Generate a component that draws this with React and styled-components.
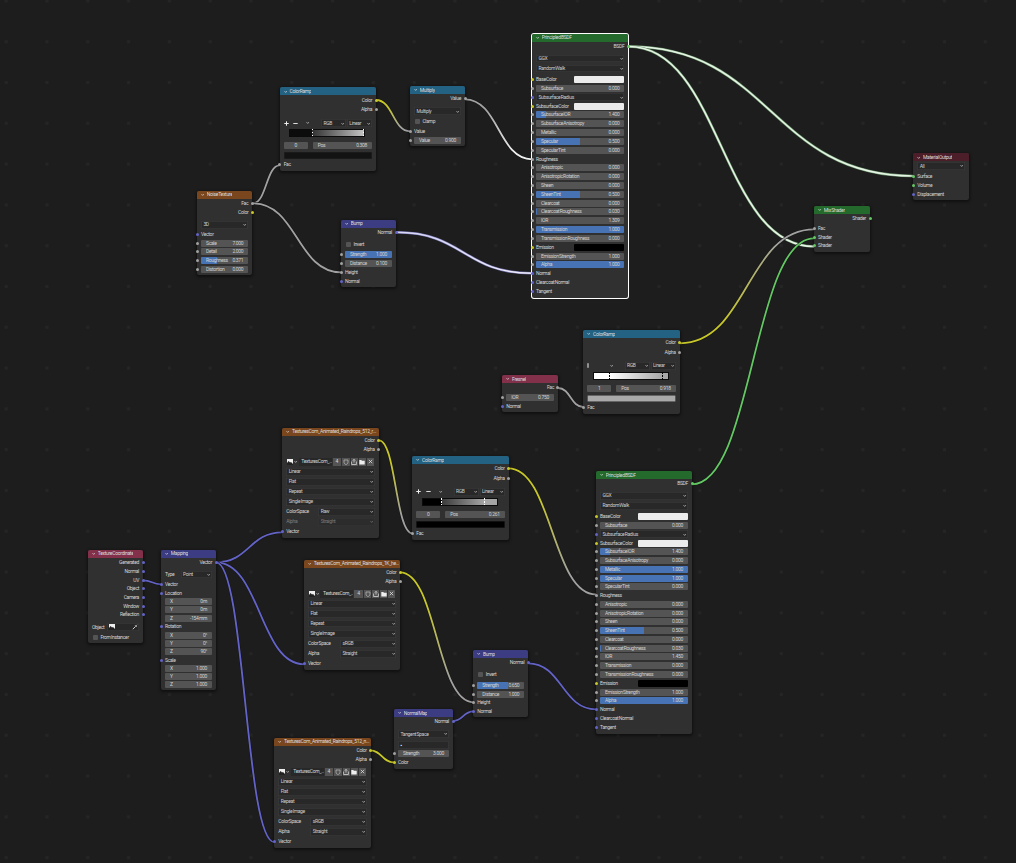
import React from 'react';
import styled, { createGlobalStyle } from 'styled-components';

const Global = createGlobalStyle`
  html, body { margin: 0; padding: 0; background: #1d1d1d; }
  #root { width: 1016px; height: 863px; }
`;

const Canvas = styled.div`
  position: relative; width: 1016px; height: 863px; overflow: hidden;
  background-color: #1d1d1d;
  background-image: radial-gradient(circle at center, #252525 0, #252525 1.5px, transparent 2.1px);
  background-size: 40.8px 40.8px;
  background-position: -14.2px -19.5px;
  font-family: "Roboto", "Liberation Sans", sans-serif;
  font-size: 5px; letter-spacing: -0.33px; word-spacing: -0.6px; line-height: 7px; color: #d6d6d6;
`;
const WireLayer = styled.svg`position: absolute; left: 0; top: 0; width: 1016px; height: 863px;`;

const NodeBox = styled.div`
  --row: ${p => p.$row || 8.84}px;
  position: absolute; left: ${p => p.$x}px; top: ${p => p.$y}px; width: ${p => p.$w}px;
  display: flex; flex-direction: column; box-sizing: border-box;
  padding-bottom: ${p => p.$pb ?? 2}px;
  background: #303030; border-radius: 2px;
  box-shadow: ${p => p.$sel ? '0 0 0 1px #fff' : '0 1px 3px 1px rgba(0,0,0,.45)'};
`;
const Header = styled.div`
  display: flex; align-items: center; gap: 2.4px; height: 8px; flex: none; box-sizing: border-box;
  padding: 0 1px 0 4px; background: ${p => p.$c}; border-radius: 2px 2px 0 0; color: #dcdcdc; overflow: hidden;
  margin-bottom: ${p => p.$mb ?? 0.4}px;
`;
const Title = styled.span`white-space: nowrap; overflow: hidden; text-overflow: ellipsis;`;
const Row = styled.div`
  position: relative; display: flex; align-items: center; flex: none; box-sizing: border-box;
  height: var(--row); margin-top: ${p => p.$mt || 0}px; padding: 0 ${p => p.$pr ?? 4}px 0 ${p => p.$pl ?? 4}px;
  justify-content: ${p => p.$out ? 'flex-end' : 'flex-start'}; gap: ${p => p.$gap || 0}px;
  opacity: ${p => p.$dim ? 0.45 : 1};
`;
const Socket = styled.i`
  position: absolute; top: 50%; width: 3px; height: 3px; margin-top: -1.5px; border-radius: 50%;
  ${p => p.$right ? 'right: -1.5px;' : 'left: -1.5px;'}
  background: ${p => p.$c};
`;
const Label = styled.span`
  white-space: nowrap; flex: none; ${p => p.$w ? `width: ${p.$w}px;` : ''}
`;
const Field = styled.div`
  flex: 1; min-width: 0; height: 7px; box-sizing: border-box; padding: 0 5px; border-radius: 1px;
  display: flex; align-items: center; justify-content: space-between; white-space: nowrap; color: #d2d2d2;
  background: ${p => p.$fill ? `linear-gradient(90deg, #4772b3 ${p.$fill * 100}%, #545454 ${p.$fill * 100}%)` : '#545454'};
  ${p => p.$center ? 'justify-content: center; flex: none; width: 24px;' : ''}
`;
const Drop = styled.div`
  flex: 1; min-width: 0; height: 7.6px; box-sizing: border-box; padding: 0 1.5px 0 2.4px; border-radius: 1px;
  display: flex; align-items: center; justify-content: space-between; white-space: nowrap;
  background: #282828; box-shadow: inset 0 0 0 .6px #3f3f3f; color: #cfcfcf;
`;
const Swatch = styled.div`flex: 1; height: 7px; border-radius: 1px; background: ${p => p.$c};`;
const CheckBox = styled.i`
  flex: none; width: 5px; height: 5px; margin-right: 2.4px; border-radius: 1px; background: #545454;
`;
const Ramp = styled.div`
  position: relative; flex: 1; height: 8px; box-sizing: border-box; border: 1px solid #0b0b0b;
  margin: 0 7px 0 5.6px; background: ${p => p.$bg};
`;
const RampMark = styled.i`
  position: absolute; top: -1px; bottom: -1px; left: ${p => p.$at}%; width: 1px;
  background: repeating-linear-gradient(180deg, ${p => p.$c} 0 1.5px, transparent 1.5px 3px);
`;
const ColorBar = styled.div`flex: 1; height: 7px; border-radius: 1px; background: ${p => p.$c}; box-shadow: inset 0 0 0 .6px #222;`;
const ToolBox = styled.div`flex: none; display: flex; align-items: center; width: 36.5px; gap: 4.4px;`;
const IconBtn = styled.div`
  flex: none; width: ${p => p.$w || 8}px; height: 7.6px; display: flex; align-items: center; justify-content: center;
  background: ${p => p.$bg || '#545454'}; border-right: .5px solid #303030; box-sizing: border-box;
`;
const NameBox = styled.div`
  flex: 1; min-width: 0; height: 7.6px; box-sizing: border-box; padding: 0 1px 0 2.6px; background: #282828;
  display: flex; align-items: center; white-space: nowrap; overflow: hidden; margin: 0 1px 0 1px;
`;

const GREY = '#a1a1a1', YEL = '#c7c729', PUR = '#6363c7', GRN = '#63c763';

const Chev = ({ size = 3.4, c = '#cfcfcf' }) => (
  <svg width={size} height={size} viewBox="0 0 6 6" style={{ flex: 'none' }}>
    <path d="M.8 1.8 3 4.4 5.2 1.8" fill="none" stroke={c} strokeWidth="1.1" />
  </svg>
);
const Plus = () => (
  <svg width="5" height="5" viewBox="0 0 5 5" style={{ flex: 'none' }}><path d="M2.5 .3v4.4M.3 2.5h4.4" stroke="#eee" strokeWidth="1" /></svg>
);
const Minus = () => (
  <svg width="5" height="5" viewBox="0 0 5 5" style={{ flex: 'none' }}><path d="M.3 2.5h4.4" stroke="#ddd" strokeWidth="1" /></svg>
);
const Tick = () => (
  <svg width="5" height="5" viewBox="0 0 5 5" style={{ flex: 'none' }}><path d="M1 .2v4.6" stroke="#eee" strokeWidth="1" /></svg>
);
const ImgIcon = () => (
  <svg width="6" height="6" viewBox="0 0 6 6" style={{ flex: 'none' }}>
    <rect width="6" height="6" fill="#eee" /><path d="M0 6V4L1.6 2 3 3.6 4 3 6 5v1z" fill="#222" />
  </svg>
);
const ShieldIcon = () => (
  <svg width="6" height="6" viewBox="0 0 6 6"><path d="M1 1h4v2.2C5 4.4 3.8 5.4 3 5.6 2.2 5.4 1 4.4 1 3.2z" fill="none" stroke="#bbb" strokeWidth=".7" /></svg>
);
const SaveIcon = () => (
  <svg width="6" height="6" viewBox="0 0 6 6"><path d="M.6 2.5v3h4.8v-3M3 .4v3.2M1.8 1.6 3 .4l1.2 1.2" fill="none" stroke="#e6e6e6" strokeWidth=".7" /></svg>
);
const FolderIcon = () => (
  <svg width="6" height="6" viewBox="0 0 6 6"><path d="M.3 1h2l.6.7h2.8v3.8H.3z" fill="#eee" /></svg>
);
const CloseIcon = () => (
  <svg width="5" height="5" viewBox="0 0 5 5"><path d="M.8.8l3.4 3.4M4.2.8.8 4.2" stroke="#ddd" strokeWidth=".8" /></svg>
);
const Dropper = () => (
  <svg width="6" height="6" viewBox="0 0 6 6" style={{ flex: 'none' }}><path d="M.8 5.2 3.6 2.4M3.2 1.4l1.4 1.4M4 1.8 5 .8" stroke="#e2e2e2" strokeWidth=".9" fill="none" /></svg>
);

const Node = ({ x, y, w, title, color, sel, row, pb, mb, children }) => (
  <NodeBox $x={x} $y={y} $w={w} $sel={sel} $row={row} $pb={pb}>
    <Header $c={color} $mb={mb}><Chev c="#e0e0e0" /><Title>{title}</Title></Header>
    {children}
  </NodeBox>
);
const Out = ({ label, c = GREY, mt }) => (
  <Row $out $mt={mt}><Label>{label}</Label><Socket $right $c={c} /></Row>
);
const In = ({ label, c = GREY, mt }) => (
  <Row $mt={mt}><Socket $c={c} /><Label>{label}</Label></Row>
);
const Num = ({ label, value, c, fill, mt, pl }) => (
  <Row $mt={mt} $pl={pl}>{c && <Socket $c={c} />}<Field $fill={fill}><span>{label}</span><span>{value}</span></Field></Row>
);
const Choice = ({ label, value, mt, labelW, dim }) => (
  <Row $mt={mt} $dim={dim}>
    {label && <Label $w={labelW}>{label}</Label>}
    <Drop><span>{value}</span><Chev /></Drop>
  </Row>
);
const Colour = ({ label, color, c = YEL, mt }) => (
  <Row $mt={mt}><Socket $c={c} /><Label $w={38}>{label}</Label><Swatch $c={color} /></Row>
);
const Check = ({ label, mt }) => (
  <Row $mt={mt} $pl={5}><CheckBox /><Label>{label}</Label></Row>
);

const ColorRamp = ({ x, y, index, pos, ramp, marks, bar, tools = true }) => (
  <Node x={x} y={y} w={96.4} title="ColorRamp" color="#246283" pb={2.2} mb={0.5}>
    <Out label="Color" c={YEL} />
    <Out label="Alpha" mt={0.4} />
    <Row $mt={5} $gap={0.8}>
      <ToolBox>
        {tools ? <><Plus /><Minus /></> : <><Tick /><span style={{ width: 5 }} /></>}
        <span style={{ marginLeft: 4 }}><Chev /></span>
      </ToolBox>
      <Drop><span>RGB</span><Chev /></Drop>
      <Drop><span>Linear</span><Chev /></Drop>
    </Row>
    <Row $mt={1}>
      <Ramp $bg={ramp}>{marks.map(m => <RampMark key={m.at} $at={m.at} $c={m.c} />)}</Ramp>
    </Row>
    <Row $mt={3.4} $gap={5}>
      <Field $center>{index}</Field>
      <Field><span>Pos</span><span>{pos}</span></Field>
    </Row>
    <Row $mt={1.2}><ColorBar $c={bar} /></Row>
    <In label="Fac" mt={0.4} />
  </Node>
);

const ImageNode = ({ x, y, title, colorSpace, dim }) => (
  <Node x={x} y={y} w={96.4} title={title} color="#79461d" pb={1.4} mb={0.3}>
    <Out label="Color" c={YEL} />
    <Out label="Alpha" mt={0.3} />
    <Row $mt={3.56} $pl={5}>
      <ImgIcon /><span style={{ marginLeft: 1 }}><Chev /></span>
      <NameBox>TexturesCom_...</NameBox>
      <IconBtn $w={9.6}>4</IconBtn>
      <IconBtn $w={8.6}><ShieldIcon /></IconBtn>
      <IconBtn><SaveIcon /></IconBtn>
      <IconBtn><FolderIcon /></IconBtn>
      <IconBtn><CloseIcon /></IconBtn>
    </Row>
    <Choice value="Linear" mt={1} />
    <Choice value="Flat" mt={1.16} />
    <Choice value="Repeat" mt={1.16} />
    <Choice value="Single Image" mt={1.3} />
    <Choice label="Color Space" labelW={32} value={colorSpace} mt={1.16} />
    <Choice label="Alpha" labelW={32} value="Straight" mt={1.16} dim={dim} />
    <In label="Vector" c={PUR} mt={1.16} />
  </Node>
);

const Bump = ({ x, y, strength, fill, distance }) => (
  <Node x={x} y={y} w={55} title="Bump" color="#3c3c83" pb={1.2}>
    <Out label="Normal" c={PUR} />
    <Check label="Invert" mt={3.16} />
    <Num label="Strength" value={strength} fill={fill} c={GREY} mt={1.56} pl={4} />
    <Num label="Distance" value={distance} c={GREY} mt={0.16} pl={4} />
    <In label="Height" />
    <In label="Normal" c={PUR} />
  </Node>
);

const Principled = ({ x, y, sel, row, v }) => (
  <Node x={x} y={y} w={sel ? 96.4 : 96} title="Principled BSDF" color="#246a2c" sel={sel} row={row} pb={2}>
    <Out label="BSDF" c={GRN} />
    <Choice value="GGX" mt={3.4} />
    <Choice value="Random Walk" mt={1.15} />
    <Colour label="Base Color" color="#ececec" mt={2.15} />
    <Num label="Subsurface" value="0.000" c={GREY} />
    <Row><Socket $c={PUR} /><Drop><span>Subsurface Radius</span><Chev /></Drop></Row>
    <Colour label="Subsurface Color" color="#ececec" />
    <Num label="Subsurface IOR" value="1.400" fill={0.11} c={GREY} />
    <Num label="Subsurface Anisotropy" value="0.000" c={GREY} />
    <Num label="Metallic" value={v.metallic} fill={v.metallicFill} c={GREY} />
    <Num label="Specular" value={v.specular} fill={v.specularFill} c={GREY} />
    <Num label="Specular Tint" value="0.000" c={GREY} />
    <In label="Roughness" />
    <Num label="Anisotropic" value="0.000" c={GREY} />
    <Num label="Anisotropic Rotation" value="0.000" c={GREY} />
    <Num label="Sheen" value="0.000" c={GREY} />
    <Num label="Sheen Tint" value="0.500" fill={0.5} c={GREY} />
    <Num label="Clearcoat" value="0.000" c={GREY} />
    <Num label="Clearcoat Roughness" value="0.030" fill={0.012} c={GREY} />
    <Num label="IOR" value={v.ior} c={GREY} />
    <Num label="Transmission" value={v.trans} fill={v.transFill} c={GREY} />
    <Num label="Transmission Roughness" value="0.000" c={GREY} />
    <Colour label="Emission" color="#000" />
    <Num label="Emission Strength" value="1.000" c={GREY} />
    <Num label="Alpha" value="1.000" fill={1} c={GREY} />
    <In label="Normal" c={PUR} />
    <In label="Clearcoat Normal" c={PUR} />
    <In label="Tangent" c={PUR} />
  </Node>
);

const wires = [
  [253, 203.3, 279.7, 165.3, GREY, GREY],
  [253, 203.3, 341, 272.3, GREY, GREY],
  [376, 100, 410, 131.3, YEL, GREY],
  [465, 99.3, 532, 159.3, GREY, '#f0f0f0'],
  [396, 232.3, 532, 273.3, '#d8d8f4', '#ecebf8', '#7a78b8'],
  [628.6, 46.5, 913.3, 176, '#e6f4e6', '#e6f4e6', '#6f9a6f'],
  [628.6, 46.5, 814, 246.5, '#e6f4e6', '#e6f4e6', '#6f9a6f'],
  [680, 343.3, 814, 229.3, YEL, GREY],
  [558, 388, 583.3, 407, GREY, GREY],
  [379, 440.3, 412.3, 533.3, YEL, GREY],
  [508.3, 468.3, 596, 594.5, YEL, GREY],
  [691.8, 484.3, 814, 238.3, GRN, GRN],
  [143, 580.3, 161, 584.3, PUR, PUR],
  [216, 562.3, 282.3, 532.3, PUR, PUR],
  [216, 562.3, 304, 664.3, PUR, PUR],
  [216, 562.3, 274.3, 842, PUR, PUR],
  [400, 572.3, 473.3, 702.3, YEL, GREY],
  [370, 750.3, 394, 762.3, YEL, YEL],
  [453, 721, 473.3, 711.3, PUR, PUR],
  [528, 663.3, 596, 709.3, PUR, PUR],
];

const Wires = () => (
  <WireLayer viewBox="0 0 1016 863">
    <defs>
      {wires.map(([x1, y1, x2, y2, a, b], i) => (
        <linearGradient key={i} id={`w${i}`} gradientUnits="userSpaceOnUse" x1={x1} y1={y1} x2={x2} y2={y2}>
          <stop offset="0.25" stopColor={a} /><stop offset="0.8" stopColor={b} />
        </linearGradient>
      ))}
    </defs>
    {wires.map(([x1, y1, x2, y2, , , under], i) => {
      const h = Math.abs(x2 - x1) * 0.5;
      const d = `M${x1} ${y1}C${x1 + h} ${y1} ${x2 - h} ${y2} ${x2} ${y2}`;
      return (
        <g key={i} fill="none">
          <path d={d} stroke={under || '#141414'} strokeWidth={under ? 2.6 : 2.8} />
          <path d={d} stroke={`url(#w${i})`} strokeWidth={under ? 1.5 : 1.8} />
        </g>
      );
    })}
  </WireLayer>
);

const App = () => (
  <Canvas>
    <Global />
    <Wires />

    <ColorRamp x={279.7} y={87.3} index="0" pos="0.308" bar="#131313"
      ramp="linear-gradient(90deg, #0c0c0c 30%, #333 30%, #c4c4c4 100%)"
      marks={[{ at: 30, c: '#fff' }, { at: 99, c: '#fff' }]} />

    <Node x={410} y={86} w={55} title="Multiply" color="#246283" pb={1.8}>
      <Out label="Value" />
      <Choice value="Multiply" mt={3.6} />
      <Check label="Clamp" mt={1} />
      <In label="Value" mt={1.2} />
      <Num label="Value" value="0.900" c={GREY} mt={0.2} />
    </Node>

    <Node x={197} y={190.7} w={55.3} title="Noise Texture" color="#79461d" pb={1}>
      <Out label="Fac" />
      <Out label="Color" c={YEL} />
      <Choice value="3D" mt={3.8} />
      <In label="Vector" c={PUR} mt={0.5} />
      <Num label="Scale" value="7.000" c={GREY} />
      <Num label="Detail" value="2.000" c={GREY} />
      <Num label="Roughness" value="0.371" fill={0.33} c={GREY} />
      <Num label="Distortion" value="0.000" c={GREY} />
    </Node>

    <Bump x={341} y={219.7} strength="1.000" fill={1} distance="0.100" />

    <Principled x={532} y={33.6} sel v={{ metallic: '0.000', specular: '0.500', specularFill: 0.5, ior: '1.309', trans: '1.000', transFill: 1 }} />

    <Node x={913.3} y={153.3} w={55.7} title="Material Output" color="#4b1e2a" pb={1.6} mb={0}>
      <Choice value="All" mt={0.4} />
      <In label="Surface" c={GRN} mt={1.2} />
      <In label="Volume" c={GRN} mt={0.4} />
      <In label="Displacement" c={PUR} mt={0.2} />
    </Node>

    <Node x={814} y={206} w={56} title="Mix Shader" color="#246a2c" pb={2}>
      <Out label="Shader" c={GRN} />
      <In label="Fac" mt={1.2} />
      <In label="Shader" c={GRN} mt={0.2} />
      <In label="Shader" c={GRN} mt={-0.8} />
    </Node>

    <ColorRamp x={583.3} y={330} index="1" pos="0.918" bar="#a9a9a9" tools={false}
      ramp="linear-gradient(90deg, #fff 0%, #fff 20%, #a8a8a8 92%, #a8a8a8 100%)"
      marks={[{ at: 21, c: '#000' }, { at: 92, c: '#000' }]} />

    <Node x={502.3} y={375} w={55.7} title="Fresnel" color="#83314a" pb={1.4}>
      <Out label="Fac" />
      <Num label="IOR" value="0.750" c={GREY} mt={0.4} />
      <In label="Normal" c={PUR} mt={0.2} />
    </Node>

    <ImageNode x={282.3} y={427.7} title="TexturesCom_Animated_Raindrops_512_roughness.tif" colorSpace="Raw" dim />

    <ColorRamp x={412.3} y={456} index="0" pos="0.261" bar="#000"
      ramp="linear-gradient(90deg, #000 25%, #3a3a3a 25%, #a6a6a6 83%, #a6a6a6 100%)"
      marks={[{ at: 25, c: '#fff' }, { at: 83, c: '#fff' }]} />

    <Principled x={596} y={471} row={8.77} v={{ metallic: '1.000', metallicFill: 1, specular: '1.000', specularFill: 1, ior: '1.450', trans: '0.000' }} />

    <Node x={88} y={549.7} w={55} title="Texture Coordinate" color="#83314a" pb={1}>
      <Out label="Generated" c={PUR} />
      <Out label="Normal" c={PUR} />
      <Out label="UV" c={PUR} />
      <Out label="Object" c={PUR} />
      <Out label="Camera" c={PUR} mt={-0.6} />
      <Out label="Window" c={PUR} />
      <Out label="Reflection" c={PUR} />
      <Row $mt={3.5}>
        <Label $w={15}>Object</Label>
        <Drop><ImgIcon /><Dropper /></Drop>
      </Row>
      <Check label="From Instancer" mt={1.2} />
    </Node>

    <Node x={161} y={549.7} w={55} title="Mapping" color="#3c3c83" pb={1}>
      <Out label="Vector" c={PUR} />
      <Choice label="Type" labelW={15.6} value="Point" mt={3.16} />
      <In label="Vector" c={PUR} mt={1.16} />
      <In label="Location" c={PUR} mt={0.16} />
      <Num label="X" value="0 m" mt={-0.6} />
      <Num label="Y" value="0 m" mt={-0.6} />
      <Num label="Z" value="-154 mm" mt={-0.6} />
      <In label="Rotation" c={PUR} mt={-0.2} />
      <Num label="X" value="0°" mt={-0.4} />
      <Num label="Y" value="0°" mt={-0.7} />
      <Num label="Z" value="90°" mt={-0.7} />
      <In label="Scale" c={PUR} mt={0.2} />
      <Num label="X" value="1.000" mt={-0.7} />
      <Num label="Y" value="1.000" mt={-0.7} />
      <Num label="Z" value="1.000" mt={-0.7} />
    </Node>

    <ImageNode x={304} y={559.7} title="TexturesCom_Animated_Raindrops_1K_height.tif" colorSpace="sRGB" />

    <Bump x={473.3} y={650} strength="0.650" fill={0.65} distance="1.000" />

    <Node x={394} y={709} w={59} title="Normal Map" color="#3c3c83" pb={1.4}>
      <Out label="Normal" c={PUR} />
      <Choice value="Tangent Space" mt={3.5} />
      <Row $mt={2.1}><Drop style={{ color: '#ddd' }}><span>▪</span></Drop></Row>
      <Num label="Strength" value="3.000" c={GREY} />
      <In label="Color" c={YEL} />
    </Node>

    <ImageNode x={274.3} y={737.7} title="TexturesCom_Animated_Raindrops_512_normal.tif" colorSpace="sRGB" />
  </Canvas>
);

export default App;
